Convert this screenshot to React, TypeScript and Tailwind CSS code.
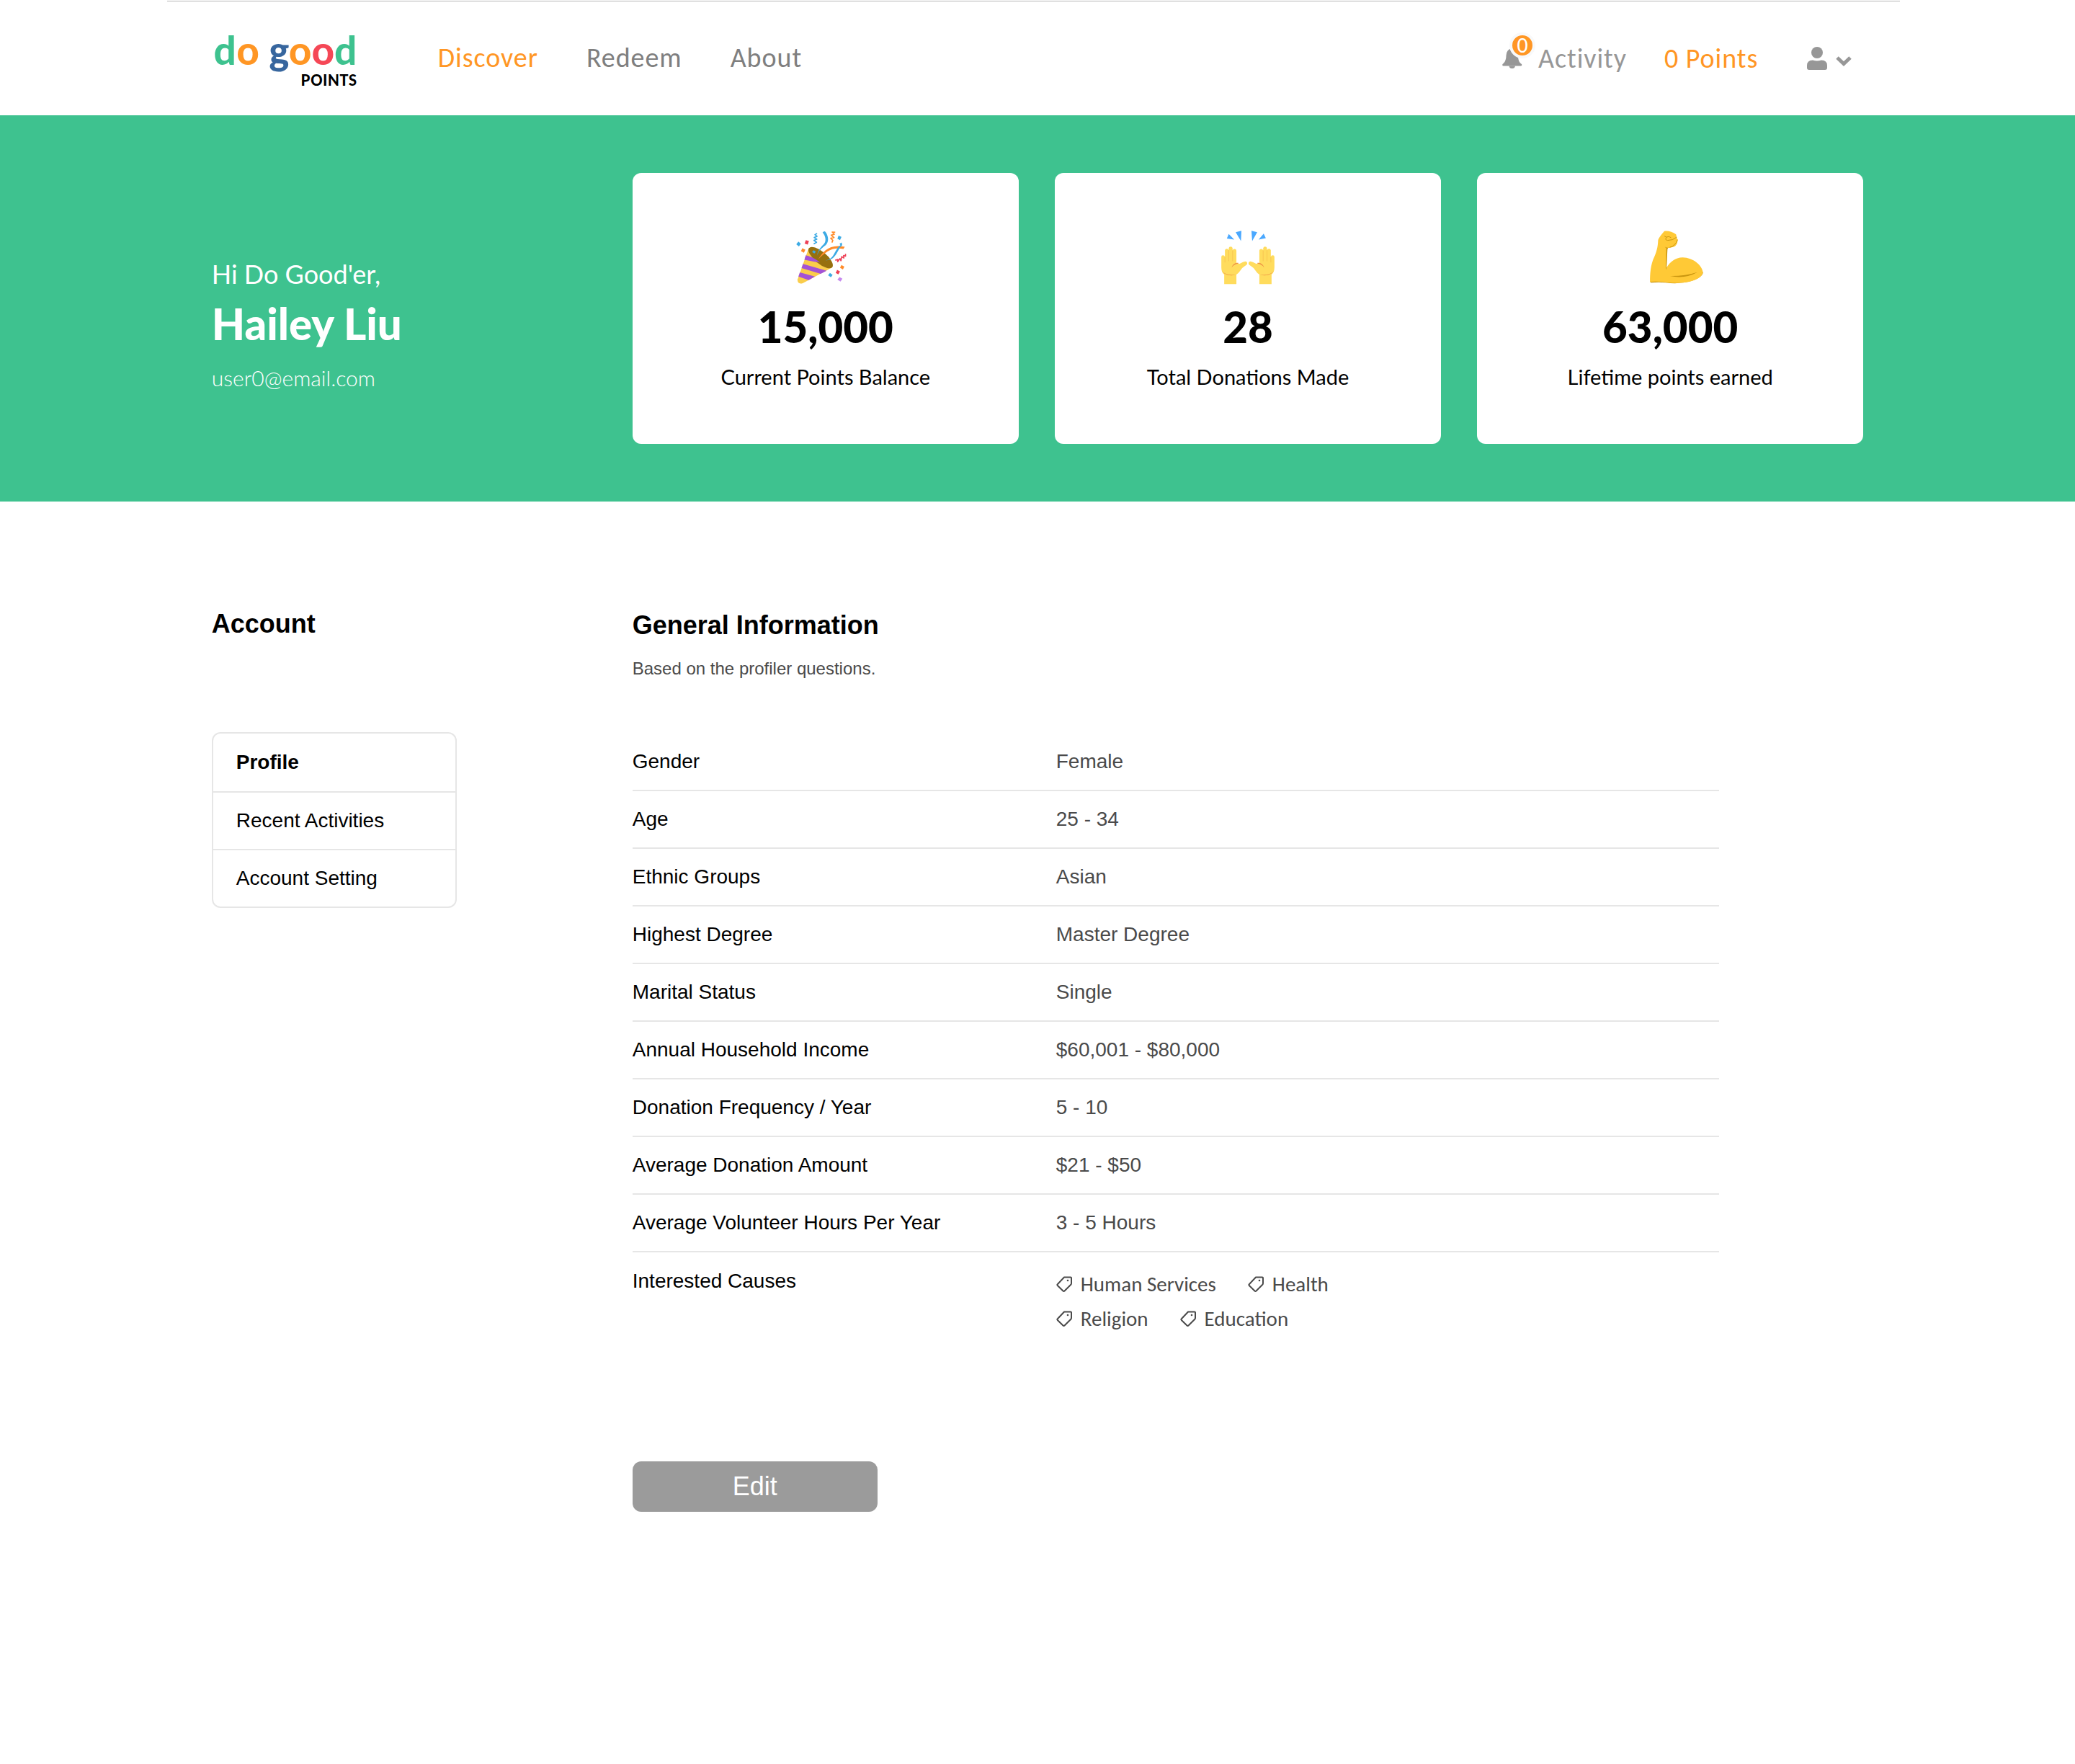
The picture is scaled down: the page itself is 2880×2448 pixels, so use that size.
import React from "react";

const stats = [
  { icon: <PartyPopper />, value: "15,000", label: "Current Points Balance" },
  { icon: <RaisedHands />, value: "28", label: "Total Donations Made" },
  { icon: <FlexedArm />, value: "63,000", label: "Lifetime points earned" },
];

const rows = [
  ["Gender", "Female"],
  ["Age", "25 - 34"],
  ["Ethnic Groups", "Asian"],
  ["Highest Degree", "Master Degree"],
  ["Marital Status", "Single"],
  ["Annual Household Income", "$60,001 - $80,000"],
  ["Donation Frequency / Year", "5 - 10"],
  ["Average Donation Amount", "$21 - $50"],
  ["Average Volunteer Hours Per Year", "3 - 5 Hours"],
];

const causes = [
  ["Human Services", "Health"],
  ["Religion", "Education"],
];

function PartyPopper() {
  return (
    <svg viewBox="58 58 288 226" className="h-[75px] w-24" aria-hidden="true">
      <path d="M131 132 L230 212 L108 277 Q86 286 84 264 Z" fill="#FACD4B" />
      <path d="M119 162 C140 168 165 181 191 198 L171 191 L113 180 Z" fill="#A352D6" />
      <path d="M107 197 L206 226 L181 239 L101 215 Z" fill="#A352D6" />
      <path d="M94 233 L157 250 L131 265 L88 250 Z" fill="#A352D6" />
      <ellipse cx="181" cy="171" rx="63" ry="25" transform="rotate(39.5 181 171)" fill="#96700F" />
      <path d="M119 162 C142 166 162 178 178 191 L114 178 Z" fill="#A352D6" />
      <path d="M189 66 Q196 58 201 63 C216 84 215 106 202 119 C188 130 173 140 166 163 C169 139 184 125 196 112 C205 101 202 80 189 66Z" fill="#3CAAE4" />
      <path d="M171 178 C190 146 218 112 282 126 L276 135 C226 126 204 147 171 178Z" fill="#FF8B2A" />
      <path d="M260 113 L269 108 L271 119 C249 137 247 184 202 182 C240 178 236 139 264 119Z" fill="#3CAAE4" />
      <path d="M166 70 L157 75 L166 82 L154 87 L165 94 L153 99 L164 107 L152 114" fill="none" stroke="#3CAAE4" strokeWidth="5" strokeLinejoin="round" />
      <path d="M242 65 L229 64 L238 74 L225 77 L237 87 L223 90 L232 99 L228 108" fill="none" stroke="#FF8B2A" strokeWidth="5" strokeLinejoin="round" />
      <path d="M242 182 L253 179 L252 188 L262 175 L266 184 L269 167 L278 173 L277 162 L285 165 L285 155" fill="none" stroke="#EE4157" strokeWidth="5" strokeLinejoin="round" />
      <g fill="#3CAAE4">
        <path d="M88 104 l10 9 -8 11 -11 -9z" />
        <path d="M256 79 l12 5 -6 14 -11 -6z" />
        <path d="M152 140 l9 6 -6 8 -10 -6z" />
        <path d="M220 235 l11 8 -7 10 -12 -8z" />
      </g>
      <g fill="#EE4157">
        <path d="M119 98 l13 4 -5 15 -13 -5z" />
        <path d="M250 222 l12 7 -7 12 -11 -6z" />
      </g>
      <g fill="#FF8B2A">
        <path d="M104 132 l13 6 -6 13 -12 -7z" />
        <path d="M268 202 l12 7 -6 12 -12 -8z" />
      </g>
      <path d="M260 252 l12 7 -8 12 -13 -8z" fill="#C689EE" />
    </svg>
  );
}

function Hand() {
  return (
    <>
      <path
        d="M84 282 V242 C76 236 72 226 72 212 V168 Q72 161 79 161 Q86 161 87 168 V140 Q88 134 95 134 Q101 134 103 140 V132 Q104 125 111 125 Q118 125 119 132 V141 Q120 135 127 135 Q135 135 135 143 V192 Q142 198 150 196 Q163 188 172 187 Q181 188 180 197 Q178 202 171 206 Q157 214 149 228 Q142 238 135 242 V282 Z"
        fill="#FFDC5D"
      />
      <path d="M87 168 V191 M103 140 V186 M119 141 V186" fill="none" stroke="#F6C350" strokeWidth="2.5" />
      <path d="M143 193 Q122 190 115 213 Q124 199 143 196Z M73 224 Q82 240 97 243 Q118 248 134 242 Q112 245 95 240 Q80 236 73 224Z" fill="#EF9645" />
    </>
  );
}

function RaisedHands() {
  return (
    <svg viewBox="39 58 288 226" className="h-[75px] w-24" aria-hidden="true">
      <Hand />
      <g transform="translate(366 0) scale(-1 1)">
        <Hand />
      </g>
      <path d="M132 65 L156 59 L154 102Z M103 72 L95 91 L126 96Z M198 59 L222 65 L201 102Z M249 71 L258 90 L228 96Z" fill="#4AA8FF" />
    </svg>
  );
}

function FlexedArm() {
  return (
    <svg viewBox="0 58 288 226" className="h-[75px] w-24" aria-hidden="true">
      <path d="M60 272 L64 276 Q98 272 125 276 Q180 284 229 270 Q281 253 282 232 L270 228 L70 260 Z" fill="#C9950F" />
      <path
        d="M60 272 C60 240 62 200 78 168 C91 138 93 118 94 97 Q97 86 120 60 Q148 58 169 74 L172 88 L176 98 Q174 120 160 126 Q146 131 132 130 L129 213 C145 188 164 171 197 170 C240 171 278 203 281 231 C280 254 247 270 200 276 Q160 279 126 274 Q100 270 60 272Z"
        fill="#FFC936"
      />
      <path d="M122 126 Q134 132 142 128 Q133 130 133 136 L129 214 L126 222 L128 132Z" fill="#C9950F" />
      <path d="M144 248 Q205 249 258 232 Q205 262 144 248Z" fill="#C9950F" />
      <path d="M121 82 Q127 89 139 83 L147 87 M128 87 Q121 97 133 99 Q155 100 171 86 M175 97 Q166 123 143 128" fill="none" stroke="#C9950F" strokeWidth="3" strokeLinecap="round" />
    </svg>
  );
}

function Tag({ children }: { children: string }) {
  return (
    <li className="flex items-center gap-3">
      <svg viewBox="0 0 22 22" className="h-[22px] w-[22px] shrink-0" fill="none" stroke="#4a4a4a" strokeWidth="2" strokeLinejoin="round" aria-hidden="true">
        <path d="M11 1.500 H20 Q21 1.500 21 2.500 V10 Q21 11 20.300 11.800 L11.500 20.500 Q10.500 21.500 9.500 20.500 L1.800 13 Q1 12 1.800 11.200 Z" />
        <circle cx="16" cy="6" r="1.300" fill="#4a4a4a" stroke="none" />
      </svg>
      {children}
    </li>
  );
}

function Logo() {
  return (
    <a href="#home" className="flex w-[202px] flex-col items-end font-['Carlito','Lato',sans-serif] font-bold">
      <span className="text-[59px] leading-[62px] tracking-normal whitespace-nowrap">
        <span className="text-[#3ec28f]">d</span>
        <span className="text-[#ff9624]">o</span> <span className="text-[#37669e]">g</span>
        <span className="text-[#ff9624]">o</span>
        <span className="text-[#f54756]">o</span>
        <span className="text-[#3ec28f]">d</span>
      </span>
      <span className="text-2xl leading-5 tracking-wide text-black">POINTS</span>
    </a>
  );
}

export default function App() {
  return (
    <div className="min-h-screen bg-white font-['Liberation_Sans',Arial,sans-serif] text-black">
      <header className="h-40 pt-px">
        <div className="ml-[8.06%] h-px w-[83.5%] bg-[#b5b5b5]" />
        <div className="mx-auto flex h-[156px] w-[79.6%] items-center justify-between font-['Carlito','Lato',sans-serif] text-[38px] leading-10 tracking-wide text-[#7f7f7f]">
          <div className="flex items-center">
            <Logo />
            <nav className="ml-28 flex gap-[67px]">
              <a href="#discover" className="text-[#ff9624]">Discover</a>
              <a href="#redeem">Redeem</a>
              <a href="#about">About</a>
            </nav>
          </div>
          <div className="flex items-center pt-0.5 pr-4 text-[#979797]">
            <a href="#activity" className="flex items-center gap-[22px]">
              <span className="relative">
                <svg viewBox="0 0 28 28" className="h-7 w-7" fill="#979797" aria-hidden="true">
                  <path d="M14 0 Q6 1 5.500 10 C5.500 17 3 20 0.500 22 Q-0.500 24.500 2 24.500 H25.500 Q28 24.500 27 22 C24 20 22 17 22 10 Q21 1 14 0Z" />
                  <path d="M9.500 24.500 Q10 28 13.700 28 Q17.500 28 18 24.500Z" />
                </svg>
                <span className="absolute -top-[22px] left-2.5 flex h-9 w-9 items-center justify-center rounded-full border-4 border-[#f8f9fa] bg-[#ff9624] text-3xl leading-7 tracking-normal text-white">
                  0
                </span>
              </span>
              Activity
            </a>
            <span className="ml-[52px] text-[#ff9624]">0 Points</span>
            <button type="button" aria-label="User menu" className="ml-[68px] flex items-center gap-3">
              <svg viewBox="0 0 28 32" className="h-8 w-7" fill="#979797" aria-hidden="true">
                <circle cx="14" cy="8" r="8" />
                <path d="M0 26 Q0 18.500 8 18.500 Q14 20.500 20 18.500 Q28 18.500 28 26 V29 Q28 32 25 32 H3 Q0 32 0 29Z" />
              </svg>
              <svg viewBox="0 0 22 14" className="mt-2 h-[14px] w-[22px]" fill="none" stroke="#979797" strokeWidth="5" aria-hidden="true">
                <path d="M2 2 L11 10.500 L20 2" />
              </svg>
            </button>
          </div>
        </div>
      </header>

      <section className="bg-[#3ec28f] py-20">
        <div className="mx-auto flex w-[79.6%]">
          <div className="w-[584px] shrink-0 pt-[118px] font-['Lato',sans-serif] text-white">
            <p className="text-4xl leading-[44px]">Hi Do Good'er,</p>
            <h1 className="text-[60px] leading-[94px] font-black">Hailey Liu</h1>
            <p className="text-[30px] leading-[56px] font-light">user0@email.com</p>
          </div>
          <ul className="grid grow grid-cols-3 gap-[50px] font-['Lato',sans-serif]">
            {stats.map((s) => (
              <li key={s.label} className="flex h-[376px] flex-col items-center rounded-xl bg-white pt-20">
                {s.icon}
                <strong className="mt-4 text-[60px] leading-[84px] font-black">{s.value}</strong>
                <span className="text-[29px] leading-[56px]">{s.label}</span>
              </li>
            ))}
          </ul>
        </div>
      </section>

      <main className="mx-auto flex w-[79.6%] pt-[148px]">
        <aside className="w-[584px] shrink-0">
          <h2 className="text-4xl leading-[44px] font-bold">Account</h2>
          <nav className="mt-32 w-[340px] divide-y-2 divide-[#e6e6e6] rounded-xl border-2 border-[#e6e6e6] text-[28px]">
            <a href="#profile" aria-current="page" className="block px-8 py-5 leading-10 font-bold">Profile</a>
            <a href="#activities" className="block px-8 py-[19px] leading-10">Recent Activities</a>
            <a href="#setting" className="block px-8 py-[19px] leading-10">Account Setting</a>
          </nav>
        </aside>

        <section className="w-[1508px]">
          <h2 className="pt-0.5 text-4xl leading-[44px] font-bold">General Information</h2>
          <p className="mt-[22px] text-2xl leading-8 text-[#4a4a4a]">Based on the profiler questions.</p>
          <table className="mt-[73px] w-full text-left text-[28px] leading-8">
            <tbody>
              {rows.map(([label, value]) => (
                <tr key={label} className="h-20 border-b-2 border-[#e6e6e6]">
                  <th scope="row" className="w-[588px] font-normal">{label}</th>
                  <td className="text-[#4a4a4a]">{value}</td>
                </tr>
              ))}
              <tr>
                <th scope="row" className="pt-6 align-top font-normal">Interested Causes</th>
                <td className="pt-5 font-['Carlito','Lato',sans-serif] text-[29px] leading-[48px] text-[#4a4a4a]">
                  {causes.map((line) => (
                    <ul key={line[0]} className="flex gap-11">
                      {line.map((cause) => (
                        <Tag key={cause}>{cause}</Tag>
                      ))}
                    </ul>
                  ))}
                </td>
              </tr>
            </tbody>
          </table>
          <button type="button" className="mt-[174px] h-[70px] w-[340px] rounded-xl bg-[#9b9b9b] text-4xl text-white">
            Edit
          </button>
        </section>
      </main>
    </div>
  );
}
